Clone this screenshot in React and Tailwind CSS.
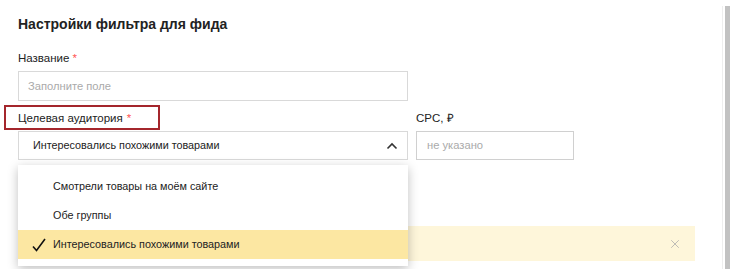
import { X } from "lucide-react";

const font = { fontFamily: '"Liberation Sans", Arial, sans-serif' };

export default function App() {
  return (
    <div className="flex w-[730px] h-[269px] bg-white overflow-hidden text-[#222]" style={font}>
      <div className="relative flex-1 pl-[18px] pt-[13px]">
        {/* Title */}
        <h1 className="text-[14px] leading-[22px] font-bold">Настройки фильтра для фида</h1>

        {/* Название */}
        <div className="mt-[14px] text-[11.5px] leading-[18px]">
          Название <span className="text-[#f55]">*</span>
        </div>
        <div className="mt-[4px] w-[390px] h-[30px] border border-[#d9d9d9] flex items-center px-[9px] text-[11.2px] text-[#aaa]">
          Заполните поле
        </div>

        {/* Целевая аудитория + CPC */}
        <div className="mt-[4px] flex gap-[8px]">
          <div className="w-[390px] relative">
            <div className="-ml-[14px] w-[156px] h-[25px] border-2 border-[#a4262c] flex items-center pl-[12px] text-[11.5px] pt-[2px]">
              Целевая аудитория <span className="ml-[4px] text-[#f55]">*</span>
            </div>
            <div className="mt-px h-[29px] border border-[#d9d9d9] flex items-center justify-between pl-[14px] pr-[9px] text-[10.8px]">
              <span>Интересовались похожими товарами</span>
              <svg width="12" height="8" viewBox="0 0 12 8" fill="none" stroke="#333" strokeWidth="1.6">
                <path d="M1.5 6.5L6 2l4.5 4.5" />
              </svg>
            </div>

            {/* Dropdown */}
            <div className="absolute left-0 top-[60px] w-[390px] bg-white py-[7px] z-10 shadow-[0_3px_10px_rgba(0,0,0,0.25)] text-[10.8px]">
              <div className="h-[29px] flex items-center pl-[35px]">Смотрели товары на моём сайте</div>
              <div className="h-[29px] flex items-center pl-[35px]">Обе группы</div>
              <div className="h-[29px] flex items-center bg-[#fce7a2]">
                <svg width="14" height="14" viewBox="0 0 14 14" fill="none" stroke="#111" strokeWidth="1.6" className="ml-[14px] mr-[7px]">
                  <path d="M1 8.5l3.5 4L13 1" />
                </svg>
                Интересовались похожими товарами
              </div>
            </div>
          </div>
          <div className="w-[158px]">
            <div className="h-[25px] flex items-center text-[11.5px] pt-[2px]">CPC, ₽</div>
            <div className="mt-px h-[29px] border border-[#d0d0d0] flex items-center px-[10px] text-[11.2px] text-[#aaa]">
              не указано
            </div>
          </div>
        </div>

        {/* Banner */}
        <div className="mt-[66px] w-[677px] h-[35px] bg-[#fef6da] flex items-center justify-end pr-[13px]">
          <X size={14} strokeWidth={1.3} className="text-[#aaa]" />
        </div>
      </div>

      {/* Scrollbar */}
      <div className="w-[8px] flex flex-col">
        <div className="h-[6px]" />
        <div className="flex-1 border-l border-[#eee] flex justify-end">
          <div className="w-[5px] bg-[#c2c2c2]" />
        </div>
      </div>
    </div>
  );
}
